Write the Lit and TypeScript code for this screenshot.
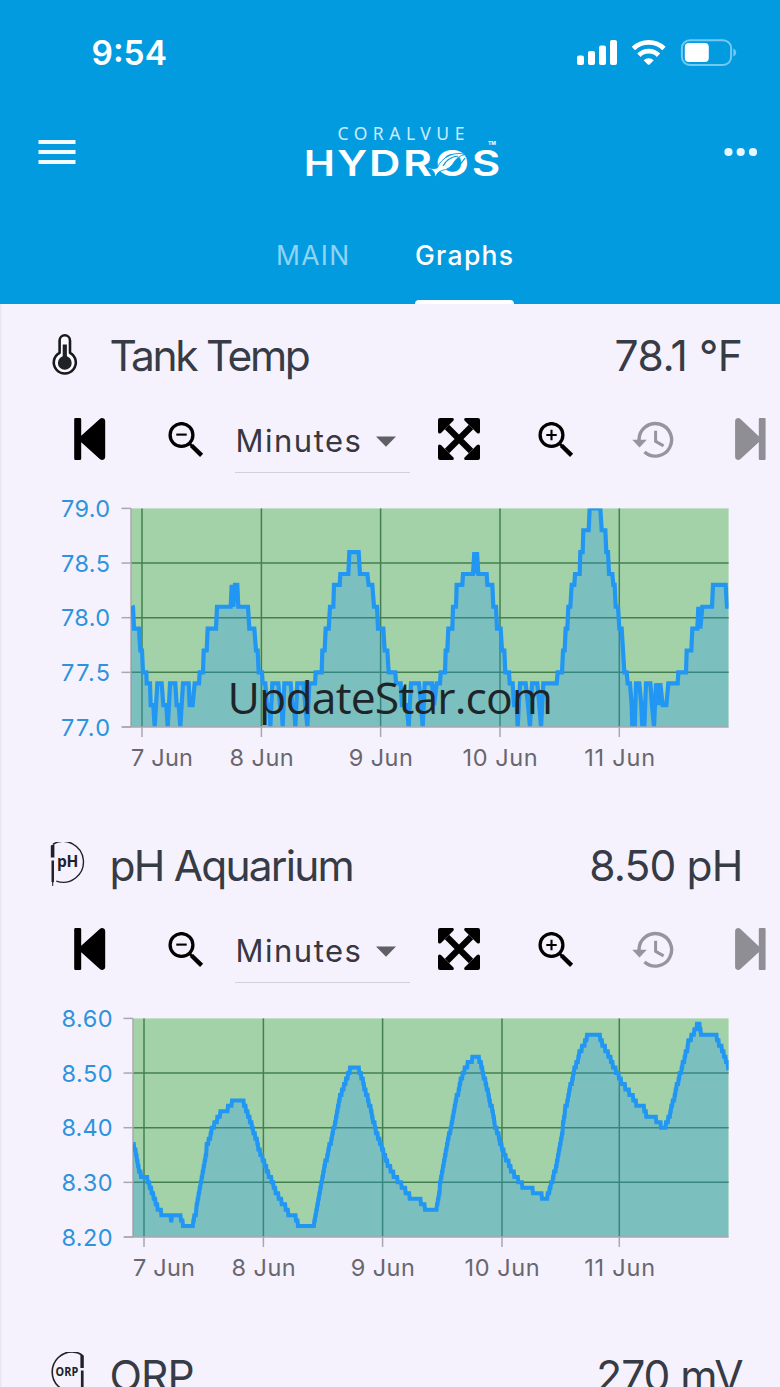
import { LitElement, html, svg, css } from "lit";
import { customElement, property } from "lit/decorators.js";

type Point = [number, number];
interface Tick { label: string; x: number; labelX: number; width: number }
interface ChartSpec {
  left: number;
  min: number;
  max: number;
  decimals: number;
  stroke: number;
  labelRight: number;
  labelWidth: number;
  ticks: Tick[];
  points: Point[];
}

const PLOT_TOP = 18.4;
const PLOT_BOTTOM = 237;
const PLOT_RIGHT = 728.6;

// Samples are recorded as [third-of-pixel offset, value] pairs.
const place = (origin: number, list: Point[]): Point[] => list.map(([x, v]) => [origin + x / 3, v]);

const tempPoints: Point[] = [
  ...place(40, [
    [277, 78.11], [279, 78.1], [282, 77.9], [297, 77.9], [301, 77.7], [306, 77.7], [309, 77.5], [319, 77.5], [320, 77.4],
    [330, 77.4], [332, 77.2], [340, 77.2], [344, 77], [348, 77.2], [352, 77.4], [365, 77.4], [370, 77.2], [379, 77.2],
    [383, 77], [387, 77.2], [390, 77.4], [406, 77.4], [410, 77.2], [416, 77.2], [421, 77], [425, 77.2], [429, 77.4],
    [446, 77.4], [449, 77.2], [458, 77.2], [464, 77.4], [477, 77.4], [479, 77.5], [489, 77.5], [491, 77.7], [500, 77.7],
    [503, 77.9], [528, 77.9], [531, 78.1], [572, 78.1], [575, 78.3], [580, 78.1], [585, 78.3], [592, 78.3], [595, 78.1],
    [624, 78.1], [628, 77.9], [643, 77.9], [648, 77.7], [653, 77.7], [656, 77.5], [666, 77.5], [668, 77.4], [676, 77.4],
    [681, 77.2], [688, 77.2], [691, 77], [697, 77.4], [715, 77.4], [720, 77.2], [725, 77.2], [728, 77], [733, 77.4],
    [752, 77.4], [757, 77.2], [762, 77.2], [766, 77], [772, 77.4], [790, 77.4], [796, 77.2], [802, 77], [808, 77.4],
    [825, 77.4], [827, 77.5], [845, 77.5], [847, 77.7], [854, 77.7], [857, 77.9], [866, 77.9], [870, 78.1], [880, 78.1],
    [882, 78.3], [899, 78.3], [901, 78.4], [925, 78.4], [928, 78.6], [956, 78.6], [960, 78.4], [982, 78.4], [986, 78.3],
    [997, 78.3], [1002, 78.1], [1011, 78.1], [1014, 77.9],
  ]),
  ...place(380, [
    [10, 77.9], [14, 77.7], [22, 77.7], [26, 77.5], [46, 77.5], [48, 77.4], [62, 77.4], [66, 77.2], [80, 77.2], [86, 77],
    [93, 77.4], [117, 77.4], [123, 77.2], [128, 77], [134, 77.4], [156, 77.4], [162, 77.2], [170, 77.4], [180, 77.4],
    [182, 77.5], [195, 77.5], [197, 77.7], [202, 77.7], [205, 77.9], [217, 77.9], [219, 78.1], [228, 78.1], [230, 78.3],
    [247, 78.3], [249, 78.4], [279, 78.4], [283, 78.6], [287, 78.4], [291, 78.6], [295, 78.4], [320, 78.4], [322, 78.3],
    [337, 78.3], [340, 78.1], [348, 78.1], [351, 77.9], [362, 77.9], [366, 77.7], [373, 77.7], [376, 77.5], [387, 77.5],
    [389, 77.4], [398, 77.4], [402, 77.2], [410, 77.2], [413, 77], [420, 77.4], [437, 77.4], [444, 77.2], [450, 77],
    [456, 77.4], [472, 77.4], [478, 77.2], [483, 77], [490, 77.4], [530, 77.4], [533, 77.5], [546, 77.5], [549, 77.7],
    [554, 77.7], [557, 77.9], [562, 77.9], [565, 78.1], [571, 78.1], [575, 78.3], [583, 78.3], [585, 78.4], [599, 78.4],
    [601, 78.6], [608, 78.6], [610, 78.8], [626, 78.8], [629, 79], [661, 79], [665, 78.8], [676, 78.8], [679, 78.6],
    [684, 78.6], [687, 78.4], [697, 78.4], [700, 78.3], [704, 78.3], [707, 78.1], [714, 78.1], [718, 77.9], [725, 77.9],
    [729, 77.7], [733, 77.5], [740, 77.5], [743, 77.4], [750, 77.4], [755, 77.2], [757, 77], [764, 77], [768, 77.4],
    [778, 77.4], [784, 77.2], [787, 77], [793, 77], [798, 77.4], [811, 77.4], [816, 77.2], [822, 77], [828, 77.4],
    [835, 77.2], [841, 77.4], [848, 77.2], [859, 77.2], [865, 77.4], [893, 77.4], [895, 77.5], [918, 77.5], [920, 77.7],
    [934, 77.7], [937, 77.9], [952, 77.9], [955, 78.1], [961, 77.9], [967, 78.1], [996, 78.1], [999, 78.3], [1037, 78.3],
    [1041, 78.1], [1046, 78.1],
  ]),
];

const quantize = (keys: Point[]): Point[] => {
  const out: Point[] = [];
  for (let i = 0; i < keys.length - 1; i++) {
    const [x0, v0] = keys[i];
    const [x1, v1] = keys[i + 1];
    for (let x = x0; x < x1; x += 1) {
      const v = Math.round((v0 + ((v1 - v0) * (x - x0)) / (x1 - x0)) * 100) / 100;
      const last = out[out.length - 1];
      if (last && last[1] !== v) out.push([x - 0.5, last[1]]);
      out.push([x, v]);
    }
  }
  out.push(keys[keys.length - 1]);
  return out;
};

const phPoints = quantize([
  ...place(40, [
    [280, 8.37], [285, 8.355], [305, 8.305], [320, 8.305], [355, 8.25], [370, 8.24], [390, 8.24], [393, 8.234], [398, 8.24],
    [420, 8.24], [430, 8.22], [457, 8.22], [470, 8.255], [482, 8.3], [500, 8.365], [520, 8.405], [545, 8.43], [558, 8.43],
    [580, 8.45], [603, 8.45], [615, 8.44], [637, 8.4], [665, 8.345], [710, 8.28], [745, 8.245], [765, 8.235], [775, 8.22],
    [820, 8.22], [835, 8.27], [850, 8.32], [865, 8.36], [882, 8.4], [897, 8.45], [930, 8.505], [955, 8.51], [975, 8.47],
    [1005, 8.4],
  ]),
  ...place(380, [
    [8, 8.36], [20, 8.335], [50, 8.305], [95, 8.27], [120, 8.265], [140, 8.25], [168, 8.25], [180, 8.295], [192, 8.34],
    [212, 8.4], [230, 8.455], [248, 8.5], [265, 8.52], [285, 8.53], [295, 8.53], [305, 8.51], [325, 8.46], [345, 8.405],
    [366, 8.36], [400, 8.315], [430, 8.29], [450, 8.29], [470, 8.275], [483, 8.28], [488, 8.27], [500, 8.27], [510, 8.29],
    [525, 8.325], [540, 8.37], [556, 8.435], [580, 8.5], [600, 8.54], [625, 8.57], [655, 8.57], [690, 8.525], [718, 8.49],
    [745, 8.465], [775, 8.44], [790, 8.435], [803, 8.42], [820, 8.42], [840, 8.408], [847, 8.4], [855, 8.402], [862, 8.41],
    [875, 8.44], [890, 8.475], [905, 8.51], [925, 8.555], [945, 8.58], [957, 8.59], [963, 8.57], [1005, 8.57],
    [1020, 8.55], [1035, 8.53], [1045, 8.505],
  ]),
]);

const tempChart: ChartSpec = {
  left: 131, min: 77, max: 79, decimals: 1, stroke: 4.2, labelRight: 110, labelWidth: 49,
  ticks: [
    { label: "7 Jun", x: 142, labelX: 131, width: 62 },
    { label: "8 Jun", x: 261.4, labelX: 229.6, width: 64 },
    { label: "9 Jun", x: 380.6, labelX: 348.8, width: 64 },
    { label: "10 Jun", x: 500, labelX: 462.6, width: 75 },
    { label: "11 Jun", x: 619.3, labelX: 584.2, width: 71 },
  ],
  points: tempPoints,
};

const phChart: ChartSpec = {
  left: 133, min: 8.2, max: 8.6, decimals: 2, stroke: 4, labelRight: 112.5, labelWidth: 51,
  ticks: [
    { label: "7 Jun", x: 144, labelX: 133, width: 62 },
    { label: "8 Jun", x: 263.4, labelX: 231.6, width: 64 },
    { label: "9 Jun", x: 382.6, labelX: 350.8, width: 64 },
    { label: "10 Jun", x: 502, labelX: 464.6, width: 75 },
    { label: "11 Jun", x: 619.3, labelX: 584.2, width: 71 },
  ],
  points: phPoints,
};

const thermometer = html`<svg width="40" height="48" viewBox="47 331.5 40 48">
  <path d="M59.6 352.3V340a5.2 5.2 0 0 1 10.4 0v12.3a11 11 0 1 1-10.4 0Z" fill="#fcfaff" stroke="#18191d" stroke-width="2.6" stroke-linejoin="round"/>
  <circle cx="64.8" cy="362.4" r="6.9" fill="#202228"/><path d="M64.8 344v17" stroke="#202228" stroke-width="4.2"/>
</svg>`;

const phIcon = html`<svg width="40" height="48" viewBox="47.5 841.5 40 48">
  <path d="M53.5 843.6a20.4 20.4 0 1 1 3.3 37" fill="none" stroke="#202228" stroke-width="1.4"/>
  <path d="M51.3 845l3.6-1.4v13.4h-3.6zM52 860h2.5v21l-.8 1.2v3.3h-1v-3.3l-.7-1.2z" fill="#202228"/>
  <text x="57.400" y="866.800" font-size="15.5" font-weight="700" textLength="21.5" font-family="Open Sans, sans-serif" fill="#202228">pH</text>
</svg>`;

const orpIcon = html`<svg width="40" height="48" viewBox="47 1351.5 40 48">
  <path d="M82.2 1354.600a18 18 0 0 0-10-3.200a20 20 0 0 0 0 40" fill="none" stroke="#202228" stroke-width="1.6"/>
  <path d="M80.4 1353.600l3.400 1.400v12.400h-3.400zM80.900 1370h2.700v22h-2.700z" fill="#202228"/>
  <text x="55.600" y="1375.800" font-size="11.500" font-weight="700" textLength="22.6" lengthAdjust="spacingAndGlyphs" font-family="Open Sans, sans-serif" fill="#202228">ORP</text>
</svg>`;

@customElement("status-bar")
class StatusBar extends LitElement {
  static styles = css`
    :host { display: flex; align-items: center; justify-content: space-between; height: 106px; padding: 0 42px 0 91.5px; color: #fff; }
    .time { font: 600 33.5px/40px Inter, sans-serif; letter-spacing: 0; }
    .icons { display: block; }
  `;
  render() {
    return html`
      <span class="time">9:54</span>
      <svg class="icons" width="162" height="30" viewBox="576 38 162 30" fill="#fff">
        <rect x="577" y="55.500" width="7" height="9.500" rx="2"/><rect x="588" y="51" width="7" height="14" rx="2"/>
        <rect x="599" y="45.500" width="7" height="19.500" rx="2"/><rect x="610" y="40" width="7" height="25" rx="2"/>
        <g fill="none" stroke="#fff" stroke-width="4.8"><path d="M633.400 48.400a22.200 22.200 0 0 1 30.600 0"/><path d="M638.900 55.200a14 14 0 0 1 19.600 0"/></g>
        <path d="M643.600 60.200a7.600 7.600 0 0 1 10.200 0l-4.200 4.200q-.9.8-1.800 0z"/>
        <rect x="681.900" y="40.200" width="49.200" height="24.800" rx="8" fill="none" stroke="#74c9f2" stroke-width="2"/>
        <rect x="684.800" y="43" width="24" height="19" rx="4"/>
        <path d="M733.400 48.600q2.800 1.200 2.800 4t-2.800 4z" fill="#74c9f2"/>
      </svg>`;
  }
}

@customElement("brand-logo")
class BrandLogo extends LitElement {
  static styles = css`
    :host { display: block; }
    .logo { display: block; fill: #fff; }
    .maker { font: 400 17.5px "Noto Sans", sans-serif; fill: #c9ebfb; }
    .word { font: 600 35px Inter, sans-serif; }
    .mark { font: 700 5px/5px Inter, sans-serif; }
  `;
  render() {
    const letters: [string, number, number][] = [["H", 303.8, 31.2], ["Y", 337.2, 30], ["D", 369, 31.4], ["R", 403, 29], ["O", 435.6, 33.6], ["S", 471.800, 28.6]];
    return html`<svg class="logo" width="200" height="64" viewBox="302 120 200 64">
      <text class="maker" x="337.400" y="139.800" textLength="127">CORALVUE</text>
      ${letters.map(([c, x, w]) => svg`<text class="word" x=${x} y="175.500" textLength=${w} lengthAdjust="spacingAndGlyphs">${c}</text>`)}
      <path d="M428 167.400q5 2.200 9.200.5q3-8 12.500-12.500q9-3.600 15-.8q-6 1-9.800 6.300q-4.700 8.700-13.200 9.600q-4.200 1.100-6.500 6.800q-.4-5.300-3.200-7.200q-3-.8-5-2.700z" stroke="#039be0" stroke-width=".9"/>
      <path d="M443 166q5-9 15-10M449 170q10-2 16-12" fill="none" stroke="#039be0" stroke-width="1.200"/>
      <text class="mark" x="488" y="145.200" textLength="8">TM</text>
    </svg>`;
  }
}

@customElement("app-header")
class AppHeader extends LitElement {
  static styles = css`
    :host { display: block; height: 304px; background: #039be0; font-family: Inter, sans-serif; }
    .bar { display: grid; grid-template-columns: 38px 200px 33px; justify-content: space-between; align-items: center; height: 92px; padding: 0 23px 0 38px; }
    .bar brand-logo { margin-left: 1.5px; }
    .tabs { display: flex; gap: 66px; height: 106px; padding-left: 276px; }
    .tab { box-sizing: border-box; display: flex; align-items: center; height: 106px; padding-top: 8px; font-size: 26.5px; line-height: 36px; color: #8fd3f5; letter-spacing: 1.3px; width: 73.5px; white-space: nowrap; }
    .tab.active { width: 99px; color: #fff; font-weight: 500; position: relative; letter-spacing: 1.3px; margin-left: -0.5px; }
    .tab.active::after { content: ""; position: absolute; left: 0; right: 0; bottom: 0; height: 4.500px; border-radius: 5px 5px 0 0; background: #fff; }
  `;
  render() {
    return html`
      <status-bar></status-bar>
      <div class="bar">
        <svg width="38" height="26" viewBox="0 0 38 26" fill="#f2fbff"><path d="M.5 1h37v4H.5zM.5 11h37v4H.5zM.5 21h37v4H.5z"/></svg>
        <brand-logo></brand-logo>
        <svg width="33" height="10" viewBox="0 0 33 10" fill="#e5f6fe"><circle cx="4.500" cy="5" r="4.100"/><circle cx="16.700" cy="5" r="4.100"/><circle cx="29" cy="5" r="4.100"/></svg>
      </div>
      <div class="tabs"><div class="tab">MAIN</div><div class="tab active">Graphs</div></div>`;
  }
}

@customElement("range-toolbar")
class RangeToolbar extends LitElement {
  static styles = css`
    :host { display: grid; grid-template-columns: 94px 67px 202.5px 100px 94px 103px 31px; align-items: center; height: 68px; padding-left: 74px; }
    .icon { display: block; }
    .lens { margin-top: 2px; }
    .select { box-sizing: border-box; display: flex; align-items: center; justify-content: space-between; width: 175px; height: 67px; padding: 5px 14px 0 0.5px; border-bottom: 1.500px solid #d3d0dc; font: 400 31px/40px Inter, sans-serif; letter-spacing: 1.500px; color: #363742; }
  `;
  render() {
    const lens = (sign: string) => html`<svg class="icon lens" width="36" height="36" viewBox="0 0 36 36" fill="none" stroke="#000">
      <circle cx="13.500" cy="13" r="11.400" stroke-width="3.300"/><path d="M21.500 21.500l3 3" stroke-width="2.800"/><path d="M23.500 23.500L33.600 33.400" stroke-width="4.400"/><path d=${sign} stroke-width="2.100"/></svg>`;
    return html`
      <svg class="icon" width="32" height="42" viewBox="0 0 32 42"><path d="M1.600 0h4.400q1.200 0 1.200 1.200v16.600L25.800 1q2-1.700 4-.4q1.400.8 1.400 2.400v36q0 1.700-1.400 2.500q-2 1.100-4-.5L7.200 24.300v16.500q0 1.200-1.200 1.200H1.600Q.2 42 .2 40.800V1.200Q.2 0 1.600 0Z"/></svg>
      ${lens("M8.300 12.600h10.400")}
      <div class="select"><span>Minutes</span><svg width="20" height="11" viewBox="0 0 20 11"><path d="M0 .5h20L10 10.800z" fill="#5f5f66"/></svg></div>
      <svg class="icon" width="42" height="42" viewBox="0 0 42 42"><path d="M9 9L33 33M33 9L9 33" stroke="#000" stroke-width="6.200"/>
        <path d="M2 0h12.500q2 .5 1 2.500L3 15Q.5 16.500 0 14V2Q0 0 2 0ZM40 0H27.500q-2 .5-1 2.500L39 15q2.500 1.500 3-1V2q0-2-2-2ZM2 42h12.500q2-.5 1-2.500L3 27Q.5 25.500 0 28v12q0 2 2 2ZM40 42H27.500q-2-.5-1-2.500L39 27q2.500-1.500 3 1v12q0 2-2 2Z"/></svg>
      ${lens("M8.300 13h10.400M13.500 7.800v10.400")}
      <svg class="icon" width="42" height="38" viewBox="0 0 42 38" fill="none" stroke="#96949c" stroke-width="3.400">
        <path d="M7 21V19.500A16.300 16.300 0 1 1 12.500 32"/><path d="M.2 19.800h14.600L7.500 27.500z" fill="#96949c" stroke="none"/><path d="M23.600 10.800v10.600l8 4.500" stroke-width="3"/></svg>
      <svg class="icon" width="31" height="42" viewBox="0 0 31 42" fill="#8f8e95"><path d="M24 18.500L5.500 1q-2-1.700-4-.4Q.1 1.400.1 3v36q0 1.700 1.400 2.500q2 1.100 4-.5L24 24z"/><rect x="23.800" width="6.800" height="42" rx="1"/></svg>`;
  }
}

@customElement("history-chart")
class HistoryChart extends LitElement {
  static styles = css`
    :host { display: block; }
    .chart { display: block; width: 780px; height: 290px; }
    .value { font: 400 23.500px Inter, sans-serif; fill: #2e93dc; }
    .date { font: 400 23.500px Inter, sans-serif; fill: #68676f; }
    .grid { stroke: #44804f; stroke-width: 1.500; }
    .axis { stroke: #aaa7b0; stroke-width: 1.500; }
    .band { fill: #a3d2a9; }
    .area { fill: rgba(33, 150, 243, 0.3); }
    .line { fill: none; stroke: #2196f3; stroke-linejoin: miter; stroke-miterlimit: 1.500; }
  `;
  @property({ attribute: false }) spec!: ChartSpec;
  render() {
    const s = this.spec;
    const y = (v: number) => PLOT_BOTTOM - ((v - s.min) / (s.max - s.min)) * (PLOT_BOTTOM - PLOT_TOP);
    const rows = [0, 1, 2, 3, 4].map((i) => s.min + ((s.max - s.min) * i) / 4);
    const path = s.points.map(([x, v]) => `${x.toFixed(2)},${y(v).toFixed(2)}`).join(" ");
    const first = s.points[0][0];
    const clip = `plot-${s.decimals}`;
    return html`<svg class="chart" viewBox="0 0 780 290">
      <clipPath id=${clip}><rect x=${s.left} y=${PLOT_TOP} width=${PLOT_RIGHT - s.left} height=${PLOT_BOTTOM - PLOT_TOP}/></clipPath>
      <rect class="band" x=${s.left} y=${PLOT_TOP} width=${PLOT_RIGHT - s.left} height=${PLOT_BOTTOM - PLOT_TOP}/>
      ${rows.slice(1, 4).map((v) => svg`<line class="grid" x1=${s.left} x2=${PLOT_RIGHT} y1=${y(v)} y2=${y(v)}/>`)}
      ${s.ticks.map((t) => svg`<line class="grid" x1=${t.x} x2=${t.x} y1=${PLOT_TOP} y2=${PLOT_BOTTOM}/><line class="axis" x1=${t.x} x2=${t.x} y1="237" y2="247"/>`)}
      <line class="axis" x1=${s.left} x2=${s.left} y1=${PLOT_TOP} y2=${PLOT_BOTTOM}/>
      <g clip-path="url(#${clip})">
        <polygon class="area" points="${s.left},${PLOT_BOTTOM} ${s.left},${y(s.points[0][1])} ${first},${y(s.points[0][1])} ${path} ${PLOT_RIGHT},${PLOT_BOTTOM}"/>
        <polyline class="line" stroke-width=${s.stroke} points=${path}/>
      </g>
      <line class="axis" x1=${s.left - 9} x2=${PLOT_RIGHT} y1=${PLOT_BOTTOM} y2=${PLOT_BOTTOM}/>
      ${rows.map((v) => svg`<line class="axis" x1=${s.left - 9.5} x2=${s.left} y1=${y(v)} y2=${y(v)}/>
        <text class="value" x=${s.labelRight - s.labelWidth} y=${y(v) + 8.6} textLength=${s.labelWidth}>${v.toFixed(s.decimals)}</text>`)}
      ${s.ticks.map((t) => svg`<text class="date" x=${t.labelX} y="275.500" textLength=${t.width}>${t.label}</text>`)}
    </svg>`;
  }
}

@customElement("sensor-card")
class SensorCard extends LitElement {
  static styles = css`
    :host { display: block; height: 510px; }
    .title { box-sizing: border-box; display: grid; grid-template-columns: 62.5px 1fr auto; align-items: center; height: 101px; padding: 2px 37.5px 0 47px; font: 400 42.5px/52px Inter, sans-serif; color: #363b46; white-space: nowrap; }
    .icon svg { display: block; }
    .name { letter-spacing: var(--name-spacing, -0.7px); }
    .kern { letter-spacing: -6px; }
    .reading { letter-spacing: var(--reading-spacing, -0.8px); }
    history-chart { margin-top: 17px; }
  `;
  @property({ attribute: false }) name: unknown;
  @property() reading = "";
  @property({ attribute: false }) icon: unknown;
  @property({ attribute: false }) spec?: ChartSpec;
  render() {
    return html`
      <div class="title"><span class="icon">${this.icon}</span><span class="name">${this.name}</span><span class="reading">${this.reading}</span></div>
      ${this.spec ? html`<range-toolbar></range-toolbar><history-chart .spec=${this.spec}></history-chart>` : ""}`;
  }
}

@customElement("app-root")
class AppRoot extends LitElement {
  static styles = css`
    :host { display: block; position: relative; width: 780px; height: 1387px; overflow: hidden; background: #f5f2fd; }
    .content { display: block; box-shadow: inset 1.500px 0 #e9e6f2; }
    .temp { --name-spacing: -2.300px; --reading-spacing: -0.450px; }
    .ph { --name-spacing: -1.800px; --reading-spacing: -0.850px; }
    .orp { --name-spacing: -0.900px; --reading-spacing: -1.050px; }
    .watermark { position: absolute; left: 227.500px; top: 668.500px; font: 400 44.500px/56px "Open Sans", sans-serif; color: #1e2528; letter-spacing: -0.850px; }
  `;
  render() {
    const tankName = html`<span class="kern">T</span>ank <span class="kern">T</span>emp`;
    return html`
      <app-header></app-header>
      <main class="content">
        <sensor-card class="temp" .name=${tankName} reading="78.1 °F" .icon=${thermometer} .spec=${tempChart}></sensor-card>
        <sensor-card class="ph" .name=${"pH Aquarium"} reading="8.50 pH" .icon=${phIcon} .spec=${phChart}></sensor-card>
        <sensor-card class="orp" .name=${"ORP"} reading="270 mV" .icon=${orpIcon}></sensor-card>
      </main>
      <div class="watermark">UpdateStar.com</div>`;
  }
}
